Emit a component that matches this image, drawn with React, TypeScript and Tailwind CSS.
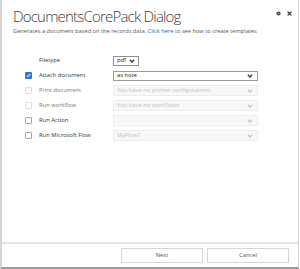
import React from "react";

const rows = [
  { label: "Filetype", box: "none", value: "pdf", kind: "small" },
  { label: "Attach document", box: "checked", value: "as note", kind: "active" },
  { label: "Print document", box: "off", value: "You have no printer configurations", kind: "disabled" },
  { label: "Run workflow", box: "off", value: "You have no workflows", kind: "disabled" },
  { label: "Run Action", box: "enabled", value: "", kind: "disabled" },
  { label: "Run Microsoft Flow", box: "enabled", value: "MyFlow1", kind: "disabled" },
];

const Chevron = ({ color }: { color: string }) => (
  <svg width="6" height="4" viewBox="0 0 6 4" className="shrink-0">
    <polyline points="0.8,0.8 3,3 5.2,0.8" fill="none" stroke={color} strokeWidth="1.3" />
  </svg>
);

function Checkbox({ state }: { state: string }) {
  if (state === "none") return <div className="w-[7px] h-[7px] shrink-0" />;
  if (state === "checked")
    return (
      <div className="w-[7px] h-[7px] shrink-0 bg-[#2f78d6] rounded-[1px] flex items-center justify-center">
        <svg width="5" height="5" viewBox="0 0 5 5">
          <polyline points="0.8,2.6 2,3.8 4.3,1" fill="none" stroke="white" strokeWidth="1" />
        </svg>
      </div>
    );
  return (
    <div
      className={`w-[7px] h-[7px] shrink-0 rounded-[1px] border ${
        state === "off" ? "border-[#dedede]" : "border-[#a8a8a8]"
      } bg-white`}
    />
  );
}

export default function App() {
  return (
    <div className="w-[300px] h-[269px] bg-white" style={{ fontFamily: '"Open Sans", "Noto Sans", sans-serif' }}>
      <div className="w-[299px] h-[269px] border-l-2 border-r border-b-2 border-l-[#d6d6d6] border-r-[#d0d0d0] border-b-[#9a9a9a] flex flex-col">
        <header className="relative pt-[6px] pl-[11px]">
          <h1 className="text-[15px] leading-[20px] font-light text-[#3b3b3b] tracking-[-0.8px]">
            DocumentsCorePack Dialog
          </h1>
          <p className="mt-[1px] text-[5.7px] leading-[8px] text-[#555]">
            Generates a document based on the records data. <span className="text-[#1d62c6]">Click here</span> to see how to create templates
          </p>
          <div className="absolute top-[11px] right-[6px] flex items-center gap-[6px]">
            <svg width="5" height="5" viewBox="0 0 5 5">
              <circle cx="2.5" cy="2.5" r="2.1" fill="#444" />
              <circle cx="2.5" cy="2.5" r="0.8" fill="#bbb" />
            </svg>
            <svg width="5" height="5" viewBox="0 0 5 5">
              <path d="M0.6 0.6 L4.4 4.4 M4.4 0.6 L0.6 4.4" stroke="#333" strokeWidth="1.3" />
            </svg>
          </div>
        </header>

        <section className="flex-1 mt-[18px] pl-[23px]">
          {rows.map((r) => (
            <div key={r.label} className="h-[15px] flex items-center">
              <Checkbox state={r.box} />
              <span
                className={`ml-[7px] w-[74px] shrink-0 text-[5.8px] ${
                  r.box === "off" ? "text-[#777]" : "text-[#333]"
                }`}
              >
                {r.label}
              </span>
              {r.kind === "small" ? (
                <div className="w-[26px] h-[10px] border border-[#8f8f8f] bg-white flex items-center justify-between px-[3px]">
                  <span className="text-[5.8px] text-[#222]">pdf</span>
                  <Chevron color="#333" />
                </div>
              ) : r.kind === "active" ? (
                <div className="w-[145px] h-[10px] border border-[#9a9a9a] bg-white flex items-center justify-between pl-[3px] pr-[4px]">
                  <span className="text-[5.8px] text-[#222]">{r.value}</span>
                  <Chevron color="#333" />
                </div>
              ) : (
                <div className="w-[145px] h-[11px] border border-[#ececec] bg-[#f8f8f8] flex items-center justify-between pl-[3px] pr-[4px]">
                  <span className="text-[5.8px] text-[#c0c0c0]">{r.value}</span>
                  <Chevron color="#c4c4c4" />
                </div>
              )}
            </div>
          ))}
        </section>

        <footer className="h-[25px] border-t-2 border-[#e6e6e6] flex justify-end items-start gap-[4px] pt-[4px] pr-[9px]">
          <button className="w-[82px] h-[15px] border border-[#d6d6d6] bg-white text-[5.8px] text-[#555]">Next</button>
          <button className="w-[82px] h-[15px] border border-[#d6d6d6] bg-white text-[5.8px] text-[#555]">Cancel</button>
        </footer>
      </div>
    </div>
  );
}
